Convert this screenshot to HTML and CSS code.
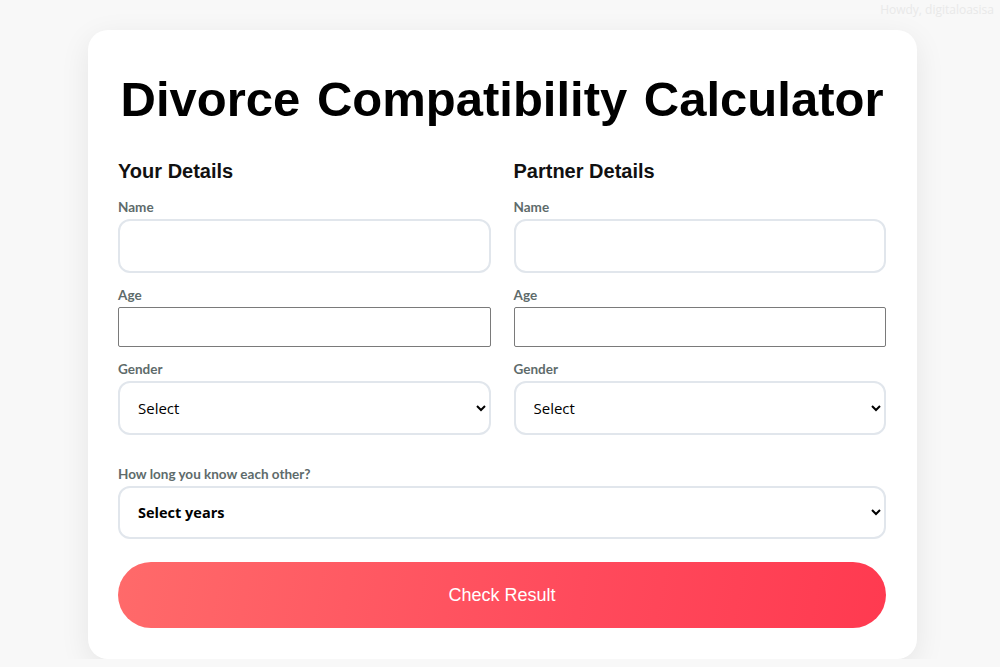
FILE: index.html
```html
<!DOCTYPE html>
<html lang="en">
<head>
    <meta charset="UTF-8">
    <title>Divorce Compatibility Calculator</title>
    <meta name="viewport" content="width=device-width, initial-scale=1.0">
    <link rel="stylesheet" href="styles.css">
</head>
<body>
    <div class="howdy">Howdy, digitaloasisa</div>
    <div class="calc-container">
        <h1 class="calc-title">Divorce Compatibility Calculator</h1>
        <form id="calcForm">
            <div class="calc-columns">
                <div class="calc-col">
                    <h3 class="col-title">Your Details</h3>
                    <div class="form-group">
                        <label for="name1">Name</label>
                        <input type="text" id="name1" class="field-big">
                    </div>
                    <div class="form-group">
                        <label for="age1">Age</label>
                        <input type="number" id="age1" class="field-plain">
                    </div>
                    <div class="form-group">
                        <label for="gender1">Gender</label>
                        <select id="gender1" class="field-big">
                            <option>Select</option>
                            <option>Male</option>
                            <option>Female</option>
                        </select>
                    </div>
                </div>
                <div class="calc-col">
                    <h3 class="col-title">Partner Details</h3>
                    <div class="form-group">
                        <label for="name2">Name</label>
                        <input type="text" id="name2" class="field-big">
                    </div>
                    <div class="form-group">
                        <label for="age2">Age</label>
                        <input type="number" id="age2" class="field-plain">
                    </div>
                    <div class="form-group">
                        <label for="gender2">Gender</label>
                        <select id="gender2" class="field-big">
                            <option>Select</option>
                            <option>Male</option>
                            <option>Female</option>
                        </select>
                    </div>
                </div>
            </div>
            <div class="form-group years-group">
                <label for="years">How long you know each other?</label>
                <select id="years" class="field-big field-bold">
                    <option>Select years</option>
                    <option>Less than 1 year</option>
                    <option>1-3 years</option>
                    <option>3-5 years</option>
                    <option>More than 5 years</option>
                </select>
            </div>
            <button type="button" class="calc-btn">Check Result</button>
        </form>
    </div>
</body>
</html>
```

FILE: styles.css
```css
body {
    background: #f8f8f8;
    font-family: 'Liberation Sans', Arial, sans-serif;
    margin: 0;
    padding: 30px 0 0 5px;
}
.howdy {
    position: absolute;
    top: 1px;
    right: 6px;
    font-family: 'Open Sans', sans-serif;
    font-size: 12px;
    color: #e9e9e9;
}
.calc-container {
    width: 829px;
    box-sizing: border-box;
    margin: 0 auto;
    background: #fff;
    border-radius: 20px;
    box-shadow: 0 8px 30px rgba(0,0,0,0.08);
    padding: 39px 31px 31px 30px;
}
.calc-title {
    margin: 0 0 30px 0;
    text-align: center;
    white-space: nowrap;
    font-size: 49px;
    line-height: 60px;
    font-weight: bold;
    color: #000;
    word-spacing: 3px;
}
.calc-columns {
    display: grid;
    grid-template-columns: 1fr 1fr;
    gap: 23px;
}
.col-title {
    margin: 0 0 16px 0;
    font-size: 20px;
    line-height: 24px;
    color: #111;
}
.form-group {
    margin-bottom: 14px;
}
label {
    display: block;
    margin-bottom: 4px;
    font-family: Lato, sans-serif;
    font-size: 13.5px;
    line-height: 16px;
    font-weight: bold;
    color: #5e6b6b;
}
.field-big {
    display: block;
    width: 100%;
    height: 54px;
    box-sizing: border-box;
    border: 2px solid #e1e6ec;
    border-radius: 12px;
    background: #fff;
    padding: 0 10px 0 14px;
    font-family: 'Open Sans', sans-serif;
    font-size: 15px;
    color: #000;
}
.field-plain {
    display: block;
    width: 100%;
    height: 40px;
    box-sizing: border-box;
    border: 1px solid #7a7a7a;
    border-radius: 2px;
    padding: 0 10px;
    font-size: 15px;
}
.field-bold {
    height: 53px;
    font-size: 14.5px;
    font-weight: bold;
}
.years-group {
    margin-top: 17px;
    margin-bottom: 23px;
}
.calc-btn {
    display: block;
    width: 100%;
    height: 66px;
    border: none;
    border-radius: 33px;
    background: linear-gradient(100deg, #ff6a6a 0%, #ff4a5c 60%, #ff3a50 100%);
    color: #fff;
    font-family: 'Liberation Sans', Arial, sans-serif;
    font-size: 18px;
    cursor: pointer;
}
```
